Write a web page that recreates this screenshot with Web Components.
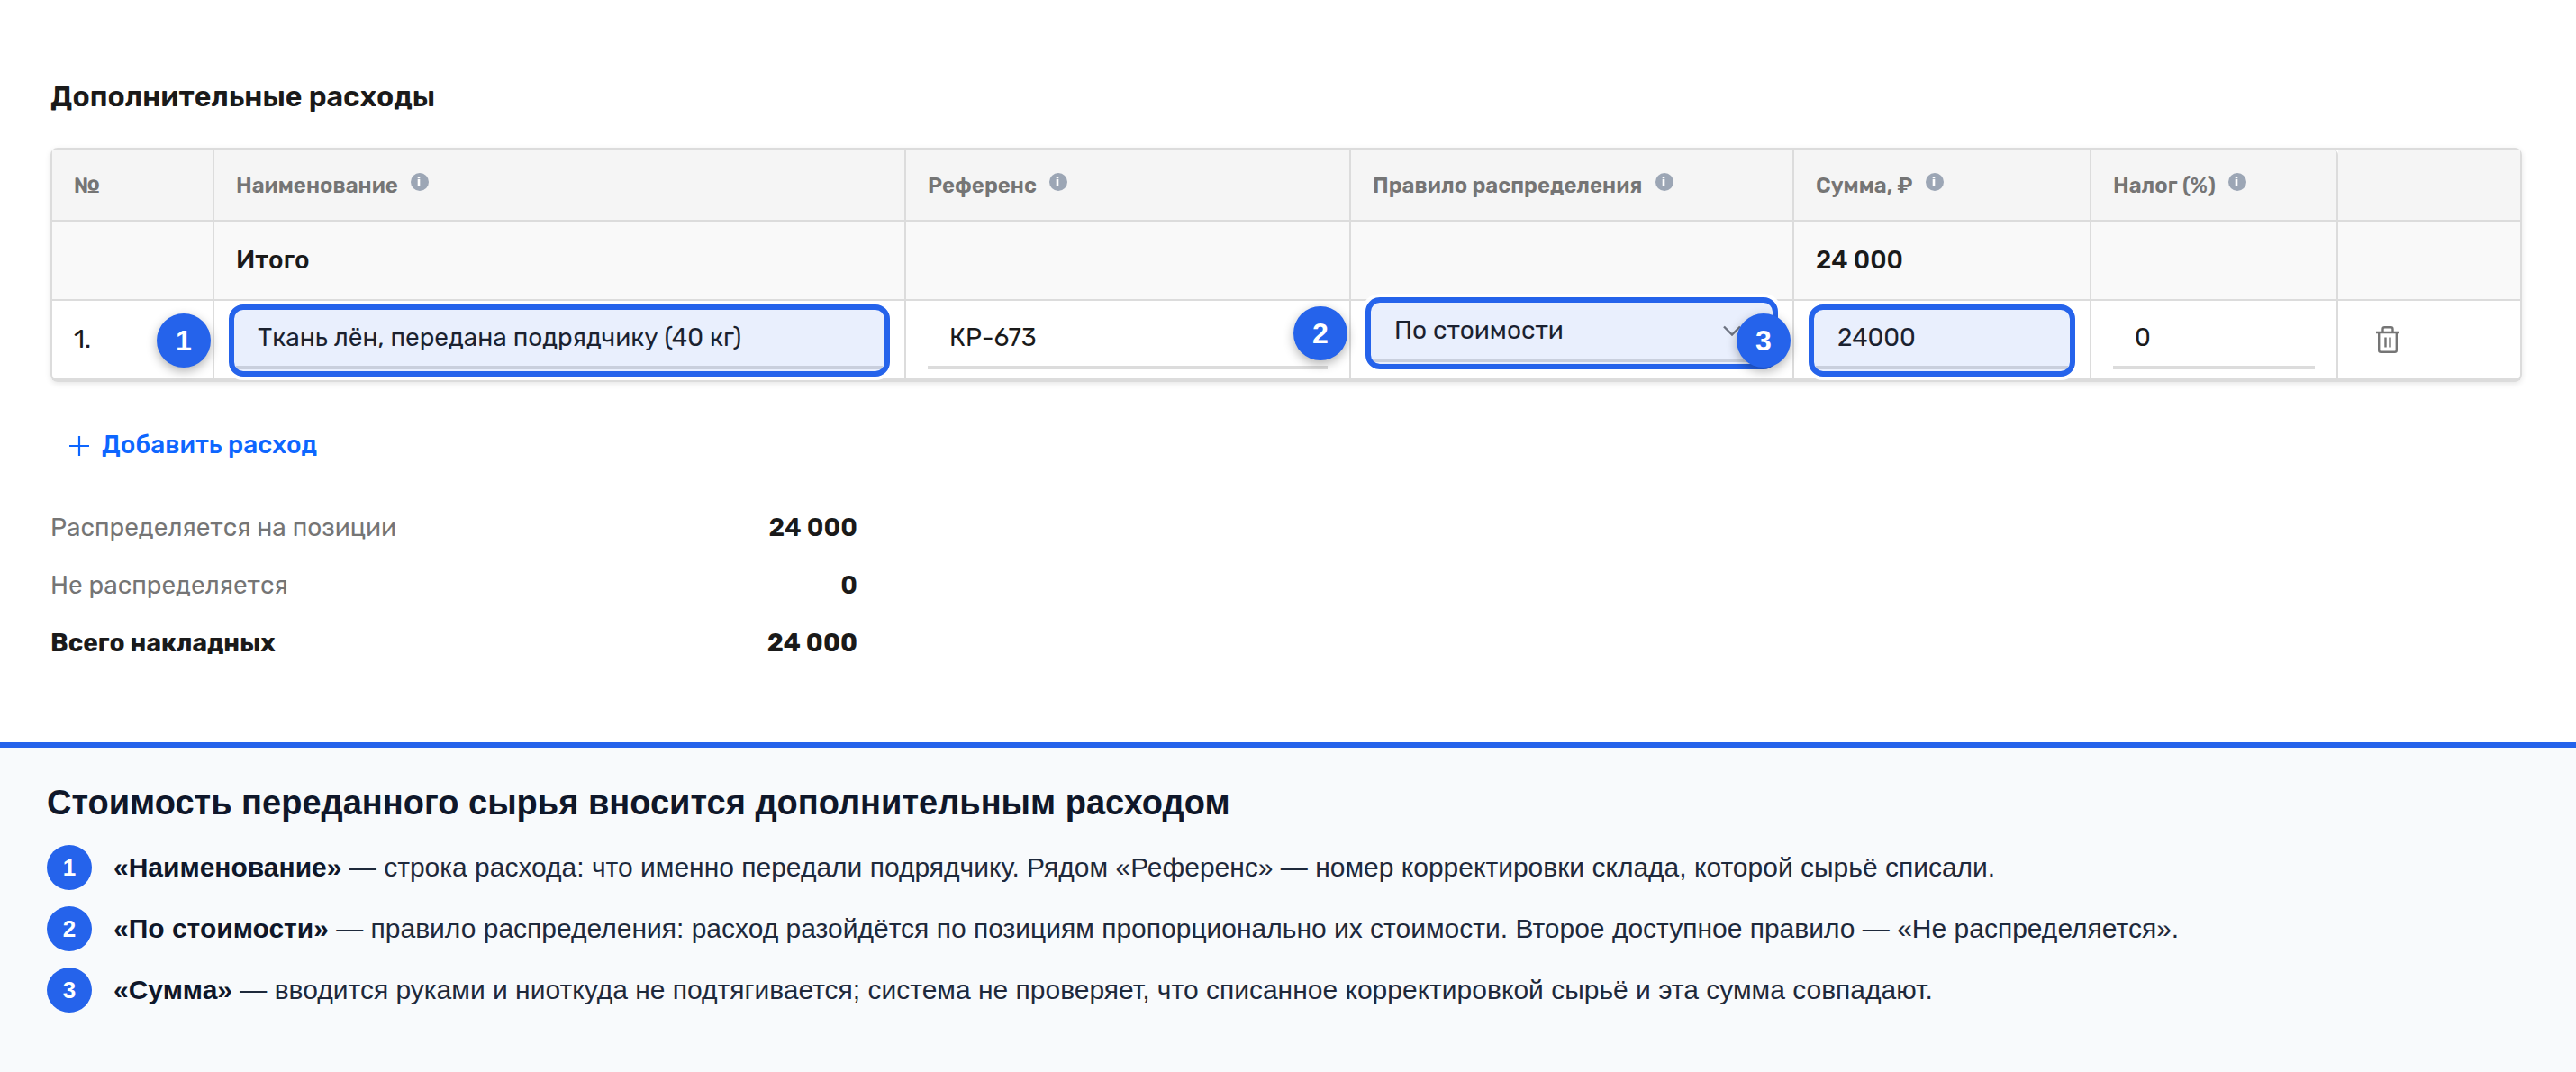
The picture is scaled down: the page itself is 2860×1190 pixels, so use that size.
<!DOCTYPE html>
<html lang="ru">
<head>
<meta charset="utf-8">
<title>Дополнительные расходы</title>
<style>
  html, body { margin: 0; height: 100%; background: #fff; }
  body {
    font-family: Rubik, Roboto, sans-serif;
    font-size: 28px;
    line-height: 34px;
    color: #1a1a1a;
  }
</style>
</head>
<body>
<expenses-page></expenses-page>

<script>
const define = (name, html) => {
  const template = document.createElement('template');
  template.innerHTML = html;
  customElements.define(name, class extends HTMLElement {
    constructor() {
      super();
      this.attachShadow({ mode: 'open' });
      this.shadowRoot.appendChild(template.content.cloneNode(true));
    }
  });
};

// small grey "i" next to a column title
define('info-icon', `
<style>
:host {
  display: inline-flex;
  justify-content: center;
  width: 20px;
  height: 20px;
  margin: 0 0 9px 14px;
  border-radius: 50%;
  background: #9ca6b5;
}
svg { width: 20px; height: 20px; }
</style>
<svg viewBox="0 0 20 20" fill="#fff"><rect x="7.7" y="4" width="2.6" height="2.2"/><rect x="7.7" y="7" width="2.6" height="7"/></svg>
`);

define('table-cell', `
<style>
:host {
  box-sizing: border-box;
  display: flex;
  align-items: center;
  min-width: 0;
  padding: 0 24px;
  border-right: 2px solid #dcdcdc;
  border-bottom: 2px solid #dcdcdc;
}
:host([head]) {
  background: #f5f5f5;
  color: #757575;
  font-size: 24px;
  font-weight: 600;
  line-height: 28px;
  padding-top: 2px;
}
:host([total]) { background: #f9f9f9; font-weight: 500; }
:host([edit]) { align-items: flex-start; padding-top: 12px; }
:host([raised]) { padding-top: 4px; }
:host([last]) { border-right: 0; }
</style>
<slot></slot>
`);

define('field-box', `
<style>
:host {
  position: relative;
  box-sizing: border-box;
  display: flex;
  align-items: center;
  justify-content: space-between;
  width: 100%;
  height: 64px;
  padding: 0 24px 3px;
  border-bottom: 4px solid #dcdcdc;
}
</style>
<slot></slot>
`);

define('number-badge', `
<style>
:host {
  display: flex;
  flex: none;
  align-items: center;
  justify-content: center;
  width: 50px;
  height: 50px;
  border-radius: 50%;
  background: #2563eb;
  color: #fff;
  font: 700 26px/30px "Liberation Sans", Arial, sans-serif;
}
</style>
<slot></slot>
`);

// blue frame over a field, with its number to the left
define('call-out', `
<style>
:host {
  position: absolute;
  inset: -8px -8px -12px;
  box-sizing: border-box;
  border: 6px solid #2563eb;
  border-radius: 16px;
  background: rgba(37, 99, 235, .1);
  box-shadow: 0 0 0 4px rgba(255, 255, 255, .9);
}
number-badge {
  position: absolute;
  left: -86px;
  top: 4px;
  width: 60px;
  height: 60px;
  font-size: 32px;
  box-shadow: 0 4px 12px rgba(0, 0, 0, .3);
}
</style>
<number-badge><slot></slot></number-badge>
`);

define('expenses-table', `
<style>
:host {
  display: grid;
  grid-template-columns: 180px 768px 494px 492px 330px 274px 202px;
  grid-template-rows: 80px 88px 88px;
  border: 2px solid #dcdcdc;
  border-radius: 8px;
  box-shadow: 0 2px 6px rgba(0, 0, 0, .1);
}
table-cell:first-child { border-top-left-radius: 6px; }
table-cell:nth-child(7) { border-top-right-radius: 6px; }
.chevron { width: 20px; height: 12px; margin-right: 9px; }
.trash { width: 28px; height: 32px; margin-left: 17px; }
</style>
<table-cell head>№</table-cell>
<table-cell head>Наименование<info-icon></info-icon></table-cell>
<table-cell head>Референс<info-icon></info-icon></table-cell>
<table-cell head>Правило распределения<info-icon></info-icon></table-cell>
<table-cell head>Сумма, ₽<info-icon></info-icon></table-cell>
<table-cell head>Налог (%)<info-icon></info-icon></table-cell>
<table-cell head last></table-cell>

<table-cell total></table-cell>
<table-cell total>Итого</table-cell>
<table-cell total></table-cell>
<table-cell total></table-cell>
<table-cell total>24 000</table-cell>
<table-cell total></table-cell>
<table-cell total last></table-cell>

<table-cell>1.</table-cell>
<table-cell edit><field-box>Ткань лён, передана подрядчику (40 кг)<call-out>1</call-out></field-box></table-cell>
<table-cell edit><field-box>КР-673</field-box></table-cell>
<table-cell edit raised><field-box>По стоимости
  <svg class="chevron" viewBox="0 0 20 12" fill="none" stroke="#757575" stroke-width="2.4"><path d="M1 1.5l9 9 9-9"/></svg>
  <call-out>2</call-out></field-box></table-cell>
<table-cell edit><field-box>24000<call-out>3</call-out></field-box></table-cell>
<table-cell edit><field-box>0</field-box></table-cell>
<table-cell last>
  <svg class="trash" viewBox="0 0 28 32" fill="none" stroke="#757575" stroke-width="2.4">
    <path d="M1 8h26M8.500 8V4.200a2 2 0 0 1 2-2h7a2 2 0 0 1 2 2V8M4.200 8v19.800a2 2 0 0 0 2 2h15.600a2 2 0 0 0 2-2V8M11.500 13.500v11M16.500 13.500v11"/>
  </svg>
</table-cell>
`);

define('add-button', `
<style>
:host {
  display: flex;
  align-items: center;
  gap: 13px;
  padding-left: 20px;
  color: #0d66ff;
  font-weight: 500;
}
svg { width: 24px; height: 24px; margin-top: 2px; }
</style>
<svg viewBox="0 0 24 24" stroke="currentColor" stroke-width="2.2"><path d="M1 12h22M12 1v22"/></svg>
<slot></slot>
`);

define('summary-row', `
<style>
:host {
  display: flex;
  justify-content: space-between;
  color: #757575;
}
::slotted(b) { color: #1a1a1a; font-weight: 600; }
:host([strong]) { color: #1a1a1a; font-weight: 700; }
:host([strong]) ::slotted(b) { font-weight: 700; }
</style>
<slot></slot>
`);

define('legend-row', `
<style>
:host {
  display: flex;
  align-items: center;
  gap: 24px;
  height: 50px;
}
::slotted(b) { color: #0f172a; }
</style>
<number-badge><slot name="number"></slot></number-badge>
<div><slot></slot></div>
`);

define('page-legend', `
<style>
:host {
  box-sizing: border-box;
  display: flex;
  flex-direction: column;
  gap: 18px;
  height: 366px;
  padding: 38px 52px 0;
  border-top: 6px solid #2563eb;
  background: #f8fafc;
  color: #1e293b;
  font: 30px/34px "Liberation Sans", Arial, sans-serif;
}
h2 {
  margin: 0 0 6px;
  color: #0f172a;
  font-size: 38px;
  line-height: 46px;
}
</style>
<h2>Стоимость переданного сырья вносится дополнительным расходом</h2>
<legend-row><span slot="number">1</span><b>«Наименование»</b> — строка расхода: что именно передали подрядчику. Рядом «Референс» — номер корректировки склада, которой сырьё списали.</legend-row>
<legend-row><span slot="number">2</span><b>«По стоимости»</b> — правило распределения: расход разойдётся по позициям пропорционально их стоимости. Второе доступное правило — «Не распределяется».</legend-row>
<legend-row><span slot="number">3</span><b>«Сумма»</b> — вводится руками и ниоткуда не подтягивается; система не проверяет, что списанное корректировкой сырьё и эта сумма совпадают.</legend-row>
`);

define('expenses-page', `
<style>
:host {
  display: flex;
  flex-direction: column;
  width: 2860px;
  height: 1190px;
  overflow: hidden;
}
main {
  box-sizing: border-box;
  height: 824px;
  padding: 87px 60px 0 56px;
}
h1 {
  margin: 0 0 37px;
  font-size: 32px;
  font-weight: 600;
  line-height: 40px;
}
add-button { margin-top: 53px; }
.summary {
  display: flex;
  flex-direction: column;
  gap: 30px;
  width: 896px;
  margin-top: 58px;
}
</style>
<main>
  <h1>Дополнительные расходы</h1>
  <expenses-table></expenses-table>
  <add-button>Добавить расход</add-button>
  <div class="summary">
    <summary-row>Распределяется на позиции<b>24 000</b></summary-row>
    <summary-row>Не распределяется<b>0</b></summary-row>
    <summary-row strong>Всего накладных<b>24 000</b></summary-row>
  </div>
</main>
<page-legend></page-legend>
`);
</script>
</body>
</html>
